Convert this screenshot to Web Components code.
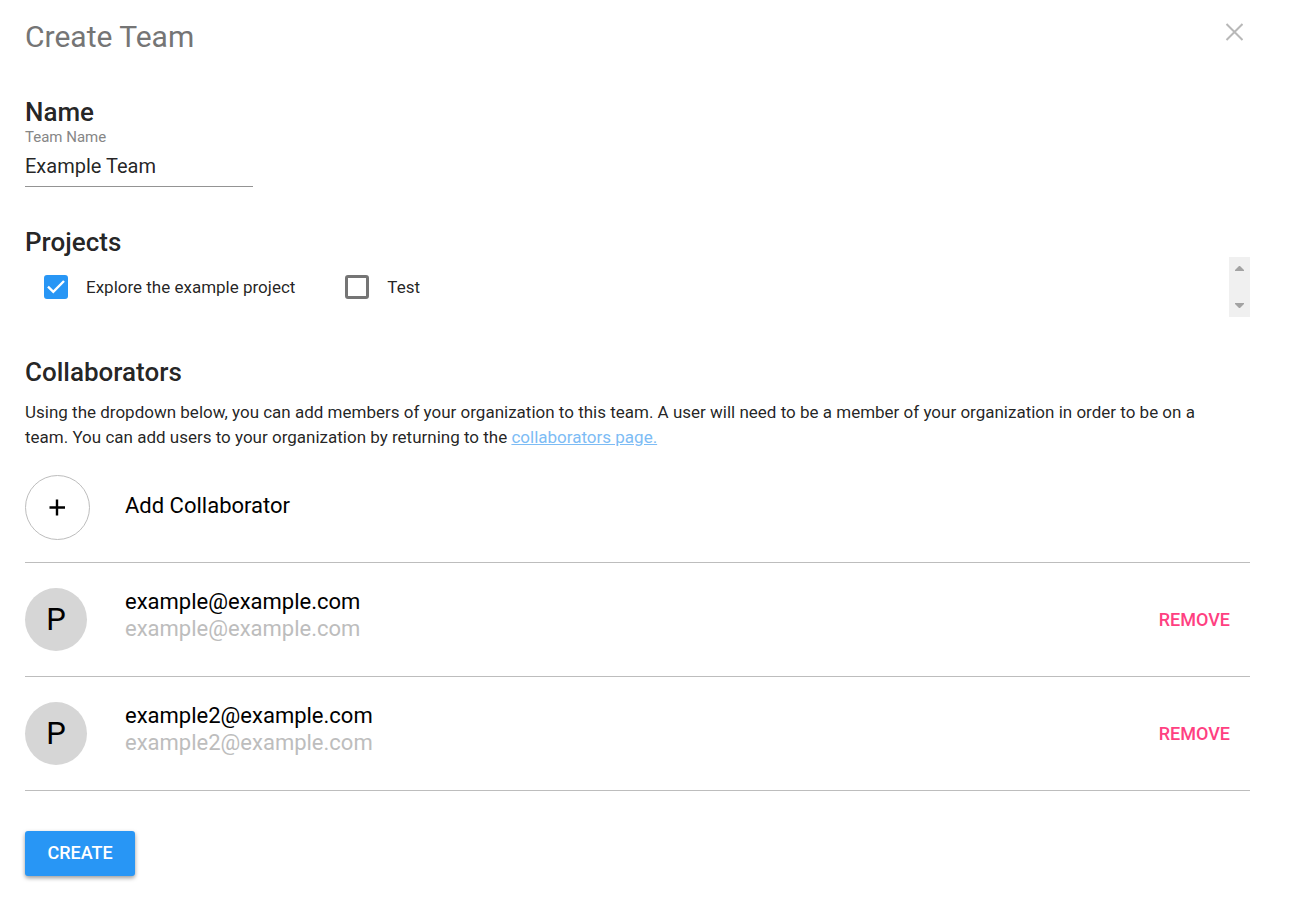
<!DOCTYPE html>
<html lang="en">
<head>
<meta charset="utf-8">
<title>Create Team</title>
<style>
  body { margin: 0; background: #fff; color: rgba(0, 0, 0, 0.87); font-family: Roboto, "Liberation Sans", sans-serif; font-size: 17px; }
</style>
</head>
<body>
<team-dialog heading="Create Team">
  <form-section heading="Name">
    <text-field label="Team Name" value="Example Team"></text-field>
  </form-section>
  <form-section heading="Projects">
    <project-list>
      <check-option checked>Explore the example project</check-option>
      <check-option>Test</check-option>
    </project-list>
  </form-section>
  <form-section heading="Collaborators">
    <help-text>Using the dropdown below, you can add members of your organization to this team. A user will need to be a member of your organization in order to be on a team. You can add users to your organization by returning to the <a href="#collaborators" slot="link">collaborators page.</a></help-text>
    <add-collaborator></add-collaborator>
    <collaborator-row initial="P" name="example@example.com" email="example@example.com"></collaborator-row>
    <collaborator-row initial="P" name="example2@example.com" email="example2@example.com"></collaborator-row>
  </form-section>
  <raised-button>CREATE</raised-button>
</team-dialog>

<script>
class BaseElement extends HTMLElement {
  connectedCallback() {
    if (this.shadowRoot) return;
    this.attachShadow({ mode: 'open' }).innerHTML =
      '<style>* { box-sizing: border-box; } button, input { font: inherit; color: inherit; margin: 0; }</style>' + this.render();
  }
  attr(name) { return this.getAttribute(name) || ''; }
}

customElements.define('team-dialog', class extends BaseElement {
  render() {
    return `
      <style>
        :host { display: block; padding: 0 54px 32px 25px; }
        header { display: flex; justify-content: space-between; align-items: flex-start; height: 57px; padding-top: 16px; }
        h1 { margin: 0; font-size: 30px; line-height: 42px; font-weight: 400; color: #757575; }
        button { display: flex; align-items: center; justify-content: center; width: 32px; height: 32px; padding: 0; border: 0; background: none; color: #b8b8b8; }
        main { display: flex; flex-direction: column; gap: 40px; padding-top: 40px; align-items: stretch; }
      </style>
      <header>
        <h1>${this.attr('heading')}</h1>
        <button type="button" aria-label="Close">
          <svg width="18" height="18" viewBox="0 0 18 18" fill="none" stroke="currentColor" stroke-width="2"><path d="M1.500 1 17.500 17M17.500 1 1.500 17"/></svg>
        </button>
      </header>
      <main><slot></slot></main>`;
  }
});

customElements.define('form-section', class extends BaseElement {
  render() {
    return `
      <style>
        :host { display: block; }
        h2 { margin: 0; font-size: 26px; line-height: 30px; font-weight: 500; }
      </style>
      <h2>${this.attr('heading')}</h2>
      <slot></slot>`;
  }
});

customElements.define('text-field', class extends BaseElement {
  render() {
    return `
      <style>
        :host { display: flex; flex-direction: column; width: 228px; }
        label { font-size: 15px; line-height: 20px; color: #868686; }
        input { width: 100%; height: 40px; padding: 0 0 2px; border: 0; border-bottom: 1px solid #949494; border-radius: 0; background: none; font-size: 20px; outline: none; }
      </style>
      <label for="field">${this.attr('label')}</label>
      <input id="field" type="text" value="${this.attr('value')}">`;
  }
});

customElements.define('project-list', class extends BaseElement {
  render() {
    return `
      <style>
        :host { display: flex; justify-content: space-between; height: 60px; }
        .items { display: flex; gap: 50px; align-items: center; padding-left: 19px; }
        .scroll { display: flex; flex-direction: column; justify-content: space-between; align-items: center; width: 21px; padding: 9px 0; background: #f0f0f0; color: #a3a3a3; }
        svg { display: block; }
      </style>
      <div class="items"><slot></slot></div>
      <div class="scroll" aria-hidden="true">
        <svg width="9" height="5" viewBox="0 0 9 5" fill="currentColor"><path d="M4 0h1l4 4v1H0V4z"/></svg>
        <svg width="9" height="5" viewBox="0 0 9 5" fill="currentColor"><path d="M0 0h9v1L5 5H4L0 1z"/></svg>
      </div>`;
  }
});

customElements.define('check-option', class extends BaseElement {
  render() {
    return `
      <style>
        :host { display: block; }
        label { display: flex; align-items: center; gap: 18px; line-height: 24px; }
        .box { display: grid; width: 24px; height: 24px; }
        .box > * { grid-area: 1 / 1; }
        input { appearance: none; width: 24px; height: 24px; border: 3px solid #757575; border-radius: 3px; }
        input:checked { border-color: #2896f5; background: #2896f5; }
        svg { visibility: hidden; pointer-events: none; }
        input:checked + svg { visibility: visible; }
      </style>
      <label>
        <span class="box">
          <input type="checkbox" ${this.hasAttribute('checked') ? 'checked' : ''}>
          <svg width="24" height="24" viewBox="0 0 24 24" fill="none" stroke="#fff" stroke-width="2.4"><path d="M4 11.700 9.300 16.800 20 6"/></svg>
        </span>
        <span><slot></slot></span>
      </label>`;
  }
});

customElements.define('help-text', class extends BaseElement {
  render() {
    return `
      <style>
        :host { display: block; padding: 13px 20px 0 0; }
        p { margin: 0; line-height: 25px; }
        ::slotted(a) { color: #7dbcf5; }
      </style>
      <p><slot></slot><slot name="link"></slot></p>`;
  }
});

const rowStyle = `
  :host { display: flex; align-items: flex-start; border-bottom: 1px solid #bdbdbd; padding-top: 25px; color: #000; font-size: 22px; line-height: 27px; }`;

customElements.define('add-collaborator', class extends BaseElement {
  render() {
    return `
      <style>${rowStyle}
        :host { padding-bottom: 22px; }
        button { display: flex; align-items: center; gap: 35px; padding: 0; border: 0; background: none; }
        .circle { display: flex; align-items: center; justify-content: center; width: 65px; height: 65px; border: 1px solid #bdbdbd; border-radius: 50%; }
        .label { padding-bottom: 4px; }
      </style>
      <button type="button">
        <span class="circle"><svg width="17" height="17" viewBox="0 0 17 17" stroke="#000" stroke-width="2.4"><path d="M0.500 8.500H16M8 0.500V16.500"/></svg></span>
        <span class="label">Add Collaborator</span>
      </button>`;
  }
});

customElements.define('collaborator-row', class extends BaseElement {
  render() {
    return `
      <style>${rowStyle}
        :host { padding-bottom: 25px; }
        .avatar { display: flex; align-items: center; justify-content: center; width: 62px; height: 63px; border-radius: 50%; background: #d6d6d6; font-size: 31px; }
        .who { flex: 1; padding-left: 38px; }
        .email { color: #bdbdbd; }
        button { align-self: center; padding: 8px 20px; border: 0; background: none; color: #ff4081; font-size: 18px; font-weight: 500; line-height: 24px; }
      </style>
      <div class="avatar">${this.attr('initial')}</div>
      <div class="who">
        <div>${this.attr('name')}</div>
        <div class="email">${this.attr('email')}</div>
      </div>
      <button type="button">REMOVE</button>`;
  }
});

customElements.define('raised-button', class extends BaseElement {
  render() {
    return `
      <style>
        :host { display: flex; }
        button { width: 110px; height: 45px; padding: 0 0 2px; border: 0; border-radius: 3px; background: #2896f5; color: #fff; font-size: 18px; font-weight: 500; box-shadow: 0 2px 4px rgba(0, 0, 0, 0.4); }
      </style>
      <button type="submit"><slot></slot></button>`;
  }
});
</script>
</body>
</html>
